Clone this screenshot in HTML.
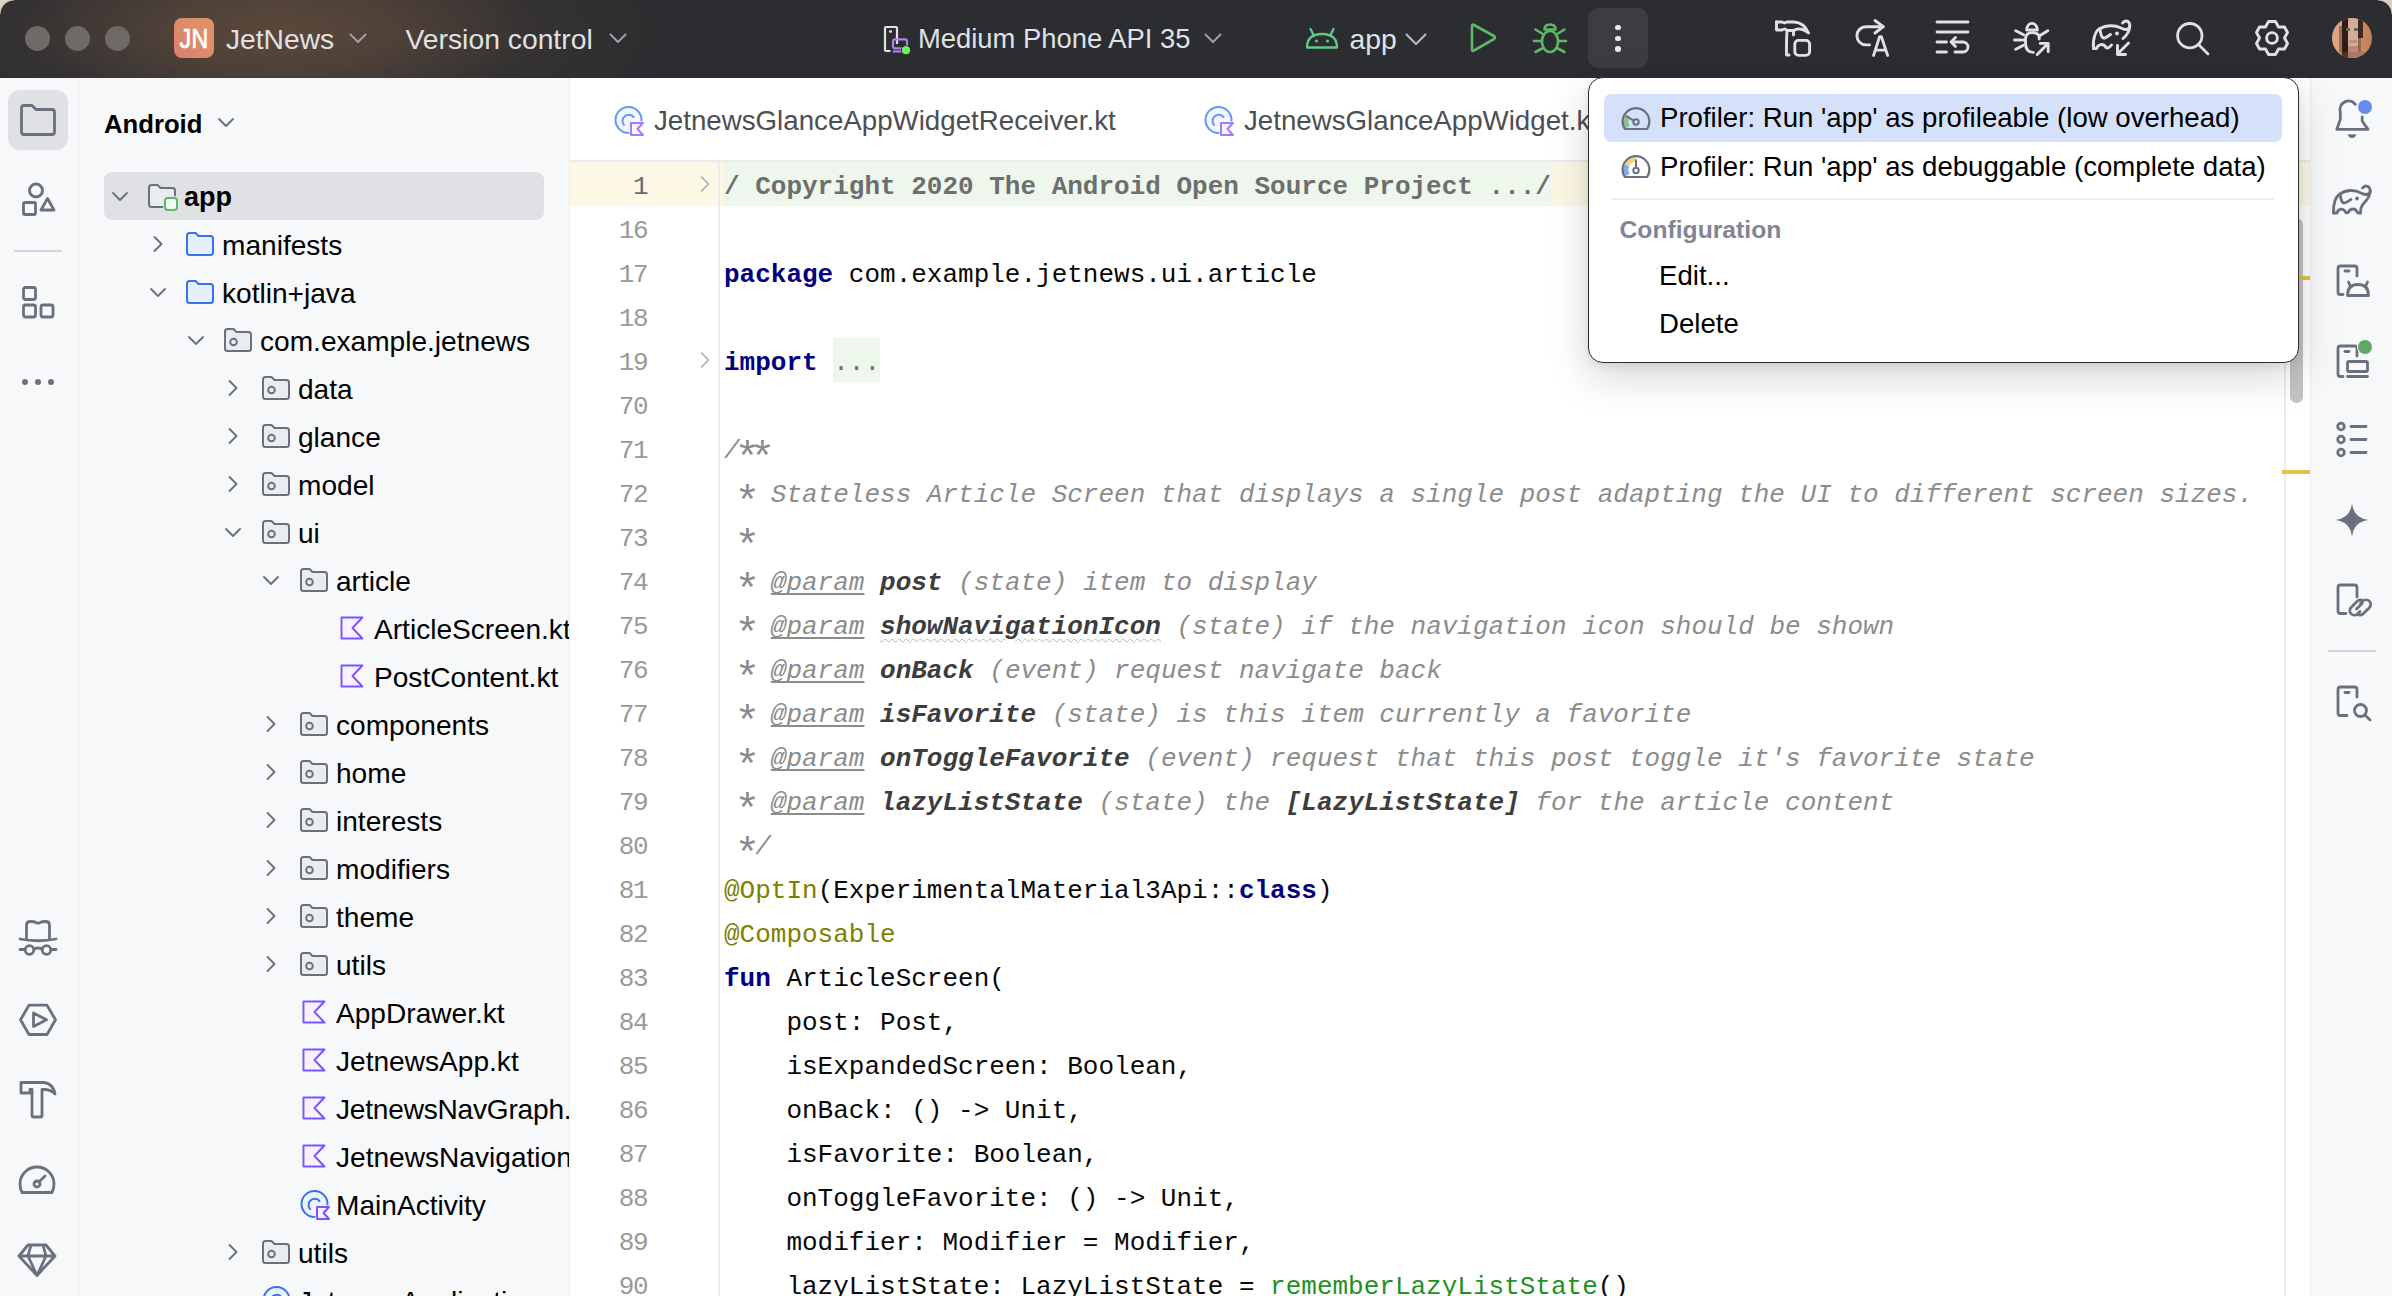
<!DOCTYPE html>
<html><head><meta charset="utf-8"><style>
*{margin:0;padding:0;box-sizing:border-box}
html,body{width:2392px;height:1296px;overflow:hidden;background:#fff}
body{position:relative;font-family:"Liberation Sans",sans-serif;color:#000}
.a{position:absolute}
#title{left:0;top:0;width:2392px;height:78px;background:#2b2d30;overflow:hidden}
.tt{color:#dfe1e5;font-size:27.6px;line-height:78px;top:0;white-space:nowrap}
.row{position:absolute;height:48px;line-height:51px;font-size:28.1px;white-space:nowrap;color:#000}
.ln{position:absolute;left:0;width:77.3px;text-align:right;letter-spacing:-1.3px;font-family:"Liberation Mono",monospace;font-size:26px;color:#999999;height:44px;line-height:50px}
.cl{position:absolute;left:154px;height:44px;line-height:50px;font-family:"Liberation Mono",monospace;font-size:26px;white-space:pre;color:#080808}
.kw{color:#000080;font-weight:bold}
.cm{color:#8c8c8c;font-style:italic}
.tag{color:#8c8c8c;font-style:italic;text-decoration:underline;text-underline-offset:3px;text-decoration-skip-ink:none;text-decoration-thickness:1.5px}
.pn{color:#3d3d3d;font-style:italic;font-weight:bold}
.pnw{color:#3d3d3d;font-style:italic;font-weight:bold;text-decoration:underline wavy #b8b8b8;text-decoration-thickness:1px;text-underline-offset:4px}
.an{color:#808000}
.ast{display:inline-block;width:15.6px;text-align:center;font-style:normal;transform:translate(-0.5px,8.5px) scale(1.65)}
.fn{color:#248f24}
.fold{color:#6e6e6e;font-weight:bold}
.dots{color:#6e6e6e;background:#eef7ec;display:inline-block;height:44px;line-height:50px;vertical-align:top}
.mi{position:absolute;font-size:27.6px;line-height:48px;height:48px;white-space:nowrap;color:#000}
svg{position:absolute;overflow:visible}
</style></head><body>
<div class="a" style="left:0;top:78px;width:79px;height:1218px;background:#f7f8fa;border-right:1.5px solid #ebecf0"></div>
<div class="a" style="left:8px;top:90px;width:60px;height:60px;border-radius:12px;background:#dfe1e5"></div>
<svg style="left:18px;top:102px" width="40" height="36" viewBox="0 0 40 36"><path d="M3.5,6 Q3.5,3.5 6,3.5 H14 L18,7.5 H34 Q36.5,7.5 36.5,10 V30 Q36.5,32.5 34,32.5 H6 Q3.5,32.5 3.5,30 Z" fill="none" stroke="#6c707e" stroke-width="2.8" stroke-linecap="round" stroke-linejoin="round" /></svg>
<svg style="left:18px;top:180px" width="40" height="40" viewBox="0 0 40 40"><circle cx="18" cy="10.5" r="6.5" fill="none" stroke="#6c707e" stroke-width="2.8" stroke-linecap="round" stroke-linejoin="round" /><rect x="5.5" y="22.5" width="12" height="12" rx="1.5" fill="none" stroke="#6c707e" stroke-width="2.8" stroke-linecap="round" stroke-linejoin="round" /><path d="M29.5,18.5 L36,30 H23 Z" fill="none" stroke="#6c707e" stroke-width="2.8" stroke-linecap="round" stroke-linejoin="round" /></svg>
<div class="a" style="left:14px;top:249.5px;width:48px;height:2px;background:#d3d5db"></div>
<svg style="left:18px;top:283px" width="40" height="40" viewBox="0 0 40 40"><rect x="5.5" y="4.5" width="12" height="12" rx="2" fill="none" stroke="#6c707e" stroke-width="2.8" stroke-linecap="round" stroke-linejoin="round" /><rect x="5.5" y="22" width="12" height="12" rx="2" fill="none" stroke="#6c707e" stroke-width="2.8" stroke-linecap="round" stroke-linejoin="round" /><rect x="23" y="22" width="12" height="12" rx="2" fill="none" stroke="#6c707e" stroke-width="2.8" stroke-linecap="round" stroke-linejoin="round" /></svg>
<div class="a" style="left:21.7px;top:378.7px;width:6px;height:6px;border-radius:50%;background:#6c707e"></div>
<div class="a" style="left:34.8px;top:378.7px;width:6px;height:6px;border-radius:50%;background:#6c707e"></div>
<div class="a" style="left:48.1px;top:378.7px;width:6px;height:6px;border-radius:50%;background:#6c707e"></div>
<svg style="left:18px;top:918px" width="40" height="40" viewBox="0 0 40 40"><path d="M8.5,20.5 V7.5 Q8.5,3.5 12.5,3.5 Q16,3.5 18.5,4.8 Q20,5.3 21.5,4.8 Q24,3.5 27.5,3.5 Q31.5,3.5 31.5,7.5 V20.5" fill="none" stroke="#6c707e" stroke-width="2.8" stroke-linecap="round" stroke-linejoin="round" /><path d="M2,21 Q20,24.5 38,21" fill="none" stroke="#6c707e" stroke-width="2.8" stroke-linecap="round" stroke-linejoin="round" /><circle cx="11.5" cy="32" r="4.3" fill="none" stroke="#6c707e" stroke-width="2.8" stroke-linecap="round" stroke-linejoin="round" /><circle cx="28.5" cy="32" r="4.3" fill="none" stroke="#6c707e" stroke-width="2.8" stroke-linecap="round" stroke-linejoin="round" /><path d="M2,31.5 H7 M33,31.5 H38 M16,31 Q20,29 24,31" fill="none" stroke="#6c707e" stroke-width="2.8" stroke-linecap="round" stroke-linejoin="round" /></svg>
<svg style="left:18px;top:1000px" width="40" height="40" viewBox="0 0 40 40"><path d="M11,5.2 H29 L37.5,19.8 L29,34.5 H11 L2.5,19.8 Z" fill="none" stroke="#6c707e" stroke-width="2.8" stroke-linecap="round" stroke-linejoin="round" /><path d="M15.5,13 L28.5,19.8 L15.5,26.6 Z" fill="none" stroke="#6c707e" stroke-width="2.8" stroke-linecap="round" stroke-linejoin="round" /></svg>
<svg style="left:18px;top:1079px" width="40" height="40" viewBox="0 0 40 40"><path d="M3,3.5 H25 Q35,4 37,15 Q33,10.5 26,10.5 H24 V36.5 Q24,38 22.5,38 H15.5 Q14,38 14,36.5 V10.5 H12 V14 H3 Z" fill="none" stroke="#6c707e" stroke-width="2.8" stroke-linecap="round" stroke-linejoin="round" /><path d="M14,14 H24" fill="none" stroke="#6c707e" stroke-width="2.8" stroke-linecap="round" stroke-linejoin="round"  opacity="0"/></svg>
<svg style="left:18px;top:1162px" width="40" height="34" viewBox="0 0 40 34"><path d="M4,30.5 Q2,26.5 2,22 A17,17 0 0 1 36,22 Q36,26.5 34,30.5 Z" fill="none" stroke="#6c707e" stroke-width="2.8" stroke-linecap="round" stroke-linejoin="round" /><circle cx="19" cy="22" r="3" fill="none" stroke="#6c707e" stroke-width="2.8" stroke-linecap="round" stroke-linejoin="round" /><path d="M21,20 L27,14" fill="none" stroke="#6c707e" stroke-width="2.8" stroke-linecap="round" stroke-linejoin="round" /></svg>
<svg style="left:18px;top:1241px" width="40" height="38" viewBox="0 0 40 38"><path d="M10,4 H28 L37,15 L19,34.5 L1,15 Z M1,15 H37 M13,4 L10,15 L19,34.5 L28,15 L25,4" fill="none" stroke="#6c707e" stroke-width="2.8" stroke-linecap="round" stroke-linejoin="round" /></svg>
<div class="a" style="left:0;top:78px;width:569px;height:1218px;overflow:hidden">
<div class="a" style="left:79px;top:0;width:490px;height:1218px;background:#f7f8fa"></div>
<div class="a" style="left:568.5px;top:0;width:1.5px;height:1218px;background:#ebecf0"></div>
<div class="a" style="left:104px;top:22px;height:48px;line-height:48px;font-size:25.7px;font-weight:bold;color:#000;white-space:nowrap">Android</div>
<svg style="left:218.0px;top:40.0px" width="16" height="9" viewBox="0 0 16 9"><path d="M1,1 L8.0,8 L15,1" fill="none" stroke="#6c707e" stroke-width="1.9" stroke-linecap="round" stroke-linejoin="round"/></svg>
<div class="a" style="left:104px;top:94px;width:440px;height:48px;border-radius:8px;background:#dfe1e5"></div>
<svg style="left:112.0px;top:113.5px" width="16" height="9" viewBox="0 0 16 9"><path d="M1,1 L8.0,8 L15,1" fill="none" stroke="#6c707e" stroke-width="1.9" stroke-linecap="round" stroke-linejoin="round"/></svg>
<svg style="left:148px;top:106px" width="30" height="28" viewBox="0 0 30 28"><path d="M1,3.5 Q1,1 3.5,1 H9.5 L12.5,4 H24.5 Q27,4 27,6.5 V20.5 Q27,23 24.5,23 H3.5 Q1,23 1,20.5 Z" fill="#ebecf0" stroke="#6c707e" stroke-width="2" stroke-linejoin="round"/><rect x="17" y="14" width="12" height="12" rx="3" fill="#dfe1e5" stroke="#dfe1e5" stroke-width="4"/><rect x="17" y="14" width="12" height="12" rx="3" fill="#f2fcf3" stroke="#5fb865" stroke-width="2"/></svg>
<div class="row" style="left:184px;top:94px;font-weight:bold;font-size:27px;">app</div>
<svg style="left:152.8px;top:158px" width="10" height="16" viewBox="0 0 10 16"><path d="M1.5,1 L8.5,8 L1.5,15" fill="none" stroke="#6c707e" stroke-width="1.9" stroke-linecap="round" stroke-linejoin="round"/></svg>
<svg style="left:186px;top:154px" width="28" height="24" viewBox="0 0 28 24"><path d="M1,3.5 Q1,1 3.5,1 H9.5 L12.5,4 H24.5 Q27,4 27,6.5 V20.5 Q27,23 24.5,23 H3.5 Q1,23 1,20.5 Z" fill="#e7effd" stroke="#3574f0" stroke-width="2" stroke-linejoin="round"/></svg>
<div class="row" style="left:222px;top:142px;">manifests</div>
<svg style="left:149.8px;top:209.5px" width="16" height="9" viewBox="0 0 16 9"><path d="M1,1 L8.0,8 L15,1" fill="none" stroke="#6c707e" stroke-width="1.9" stroke-linecap="round" stroke-linejoin="round"/></svg>
<svg style="left:186px;top:202px" width="28" height="24" viewBox="0 0 28 24"><path d="M1,3.5 Q1,1 3.5,1 H9.5 L12.5,4 H24.5 Q27,4 27,6.5 V20.5 Q27,23 24.5,23 H3.5 Q1,23 1,20.5 Z" fill="#e7effd" stroke="#3574f0" stroke-width="2" stroke-linejoin="round"/></svg>
<div class="row" style="left:222px;top:190px;">kotlin+java</div>
<svg style="left:187.6px;top:257.5px" width="16" height="9" viewBox="0 0 16 9"><path d="M1,1 L8.0,8 L15,1" fill="none" stroke="#6c707e" stroke-width="1.9" stroke-linecap="round" stroke-linejoin="round"/></svg>
<svg style="left:224px;top:250px" width="28" height="24" viewBox="0 0 28 24"><path d="M1,3.5 Q1,1 3.5,1 H9.5 L12.5,4 H24.5 Q27,4 27,6.5 V20.5 Q27,23 24.5,23 H3.5 Q1,23 1,20.5 Z" fill="#ebecf0" stroke="#6c707e" stroke-width="2" stroke-linejoin="round"/><circle cx="9.5" cy="14" r="3.3" fill="none" stroke="#6c707e" stroke-width="1.9"/></svg>
<div class="row" style="left:260px;top:238px;">com.example.jetnews</div>
<svg style="left:228.39999999999998px;top:302px" width="10" height="16" viewBox="0 0 10 16"><path d="M1.5,1 L8.5,8 L1.5,15" fill="none" stroke="#6c707e" stroke-width="1.9" stroke-linecap="round" stroke-linejoin="round"/></svg>
<svg style="left:262px;top:298px" width="28" height="24" viewBox="0 0 28 24"><path d="M1,3.5 Q1,1 3.5,1 H9.5 L12.5,4 H24.5 Q27,4 27,6.5 V20.5 Q27,23 24.5,23 H3.5 Q1,23 1,20.5 Z" fill="#ebecf0" stroke="#6c707e" stroke-width="2" stroke-linejoin="round"/><circle cx="9.5" cy="14" r="3.3" fill="none" stroke="#6c707e" stroke-width="1.9"/></svg>
<div class="row" style="left:298px;top:286px;">data</div>
<svg style="left:228.39999999999998px;top:350px" width="10" height="16" viewBox="0 0 10 16"><path d="M1.5,1 L8.5,8 L1.5,15" fill="none" stroke="#6c707e" stroke-width="1.9" stroke-linecap="round" stroke-linejoin="round"/></svg>
<svg style="left:262px;top:346px" width="28" height="24" viewBox="0 0 28 24"><path d="M1,3.5 Q1,1 3.5,1 H9.5 L12.5,4 H24.5 Q27,4 27,6.5 V20.5 Q27,23 24.5,23 H3.5 Q1,23 1,20.5 Z" fill="#ebecf0" stroke="#6c707e" stroke-width="2" stroke-linejoin="round"/><circle cx="9.5" cy="14" r="3.3" fill="none" stroke="#6c707e" stroke-width="1.9"/></svg>
<div class="row" style="left:298px;top:334px;">glance</div>
<svg style="left:228.39999999999998px;top:398px" width="10" height="16" viewBox="0 0 10 16"><path d="M1.5,1 L8.5,8 L1.5,15" fill="none" stroke="#6c707e" stroke-width="1.9" stroke-linecap="round" stroke-linejoin="round"/></svg>
<svg style="left:262px;top:394px" width="28" height="24" viewBox="0 0 28 24"><path d="M1,3.5 Q1,1 3.5,1 H9.5 L12.5,4 H24.5 Q27,4 27,6.5 V20.5 Q27,23 24.5,23 H3.5 Q1,23 1,20.5 Z" fill="#ebecf0" stroke="#6c707e" stroke-width="2" stroke-linejoin="round"/><circle cx="9.5" cy="14" r="3.3" fill="none" stroke="#6c707e" stroke-width="1.9"/></svg>
<div class="row" style="left:298px;top:382px;">model</div>
<svg style="left:225.39999999999998px;top:449.5px" width="16" height="9" viewBox="0 0 16 9"><path d="M1,1 L8.0,8 L15,1" fill="none" stroke="#6c707e" stroke-width="1.9" stroke-linecap="round" stroke-linejoin="round"/></svg>
<svg style="left:262px;top:442px" width="28" height="24" viewBox="0 0 28 24"><path d="M1,3.5 Q1,1 3.5,1 H9.5 L12.5,4 H24.5 Q27,4 27,6.5 V20.5 Q27,23 24.5,23 H3.5 Q1,23 1,20.5 Z" fill="#ebecf0" stroke="#6c707e" stroke-width="2" stroke-linejoin="round"/><circle cx="9.5" cy="14" r="3.3" fill="none" stroke="#6c707e" stroke-width="1.9"/></svg>
<div class="row" style="left:298px;top:430px;">ui</div>
<svg style="left:263.2px;top:497.5px" width="16" height="9" viewBox="0 0 16 9"><path d="M1,1 L8.0,8 L15,1" fill="none" stroke="#6c707e" stroke-width="1.9" stroke-linecap="round" stroke-linejoin="round"/></svg>
<svg style="left:300px;top:490px" width="28" height="24" viewBox="0 0 28 24"><path d="M1,3.5 Q1,1 3.5,1 H9.5 L12.5,4 H24.5 Q27,4 27,6.5 V20.5 Q27,23 24.5,23 H3.5 Q1,23 1,20.5 Z" fill="#ebecf0" stroke="#6c707e" stroke-width="2" stroke-linejoin="round"/><circle cx="9.5" cy="14" r="3.3" fill="none" stroke="#6c707e" stroke-width="1.9"/></svg>
<div class="row" style="left:336px;top:478px;">article</div>
<svg style="left:340px;top:538px" width="24" height="24" viewBox="0 0 24 24"><path d="M1.5,1.5 H22.5 L12.5,12 L22.5,22.5 H1.5 Z" transform="scale(1.0)" fill="#f6f2ff" stroke="#7f52ff" stroke-width="1.9" stroke-linejoin="round"/></svg>
<div class="row" style="left:374px;top:526px;">ArticleScreen.kt</div>
<svg style="left:340px;top:586px" width="24" height="24" viewBox="0 0 24 24"><path d="M1.5,1.5 H22.5 L12.5,12 L22.5,22.5 H1.5 Z" transform="scale(1.0)" fill="#f6f2ff" stroke="#7f52ff" stroke-width="1.9" stroke-linejoin="round"/></svg>
<div class="row" style="left:374px;top:574px;">PostContent.kt</div>
<svg style="left:266.2px;top:638px" width="10" height="16" viewBox="0 0 10 16"><path d="M1.5,1 L8.5,8 L1.5,15" fill="none" stroke="#6c707e" stroke-width="1.9" stroke-linecap="round" stroke-linejoin="round"/></svg>
<svg style="left:300px;top:634px" width="28" height="24" viewBox="0 0 28 24"><path d="M1,3.5 Q1,1 3.5,1 H9.5 L12.5,4 H24.5 Q27,4 27,6.5 V20.5 Q27,23 24.5,23 H3.5 Q1,23 1,20.5 Z" fill="#ebecf0" stroke="#6c707e" stroke-width="2" stroke-linejoin="round"/><circle cx="9.5" cy="14" r="3.3" fill="none" stroke="#6c707e" stroke-width="1.9"/></svg>
<div class="row" style="left:336px;top:622px;">components</div>
<svg style="left:266.2px;top:686px" width="10" height="16" viewBox="0 0 10 16"><path d="M1.5,1 L8.5,8 L1.5,15" fill="none" stroke="#6c707e" stroke-width="1.9" stroke-linecap="round" stroke-linejoin="round"/></svg>
<svg style="left:300px;top:682px" width="28" height="24" viewBox="0 0 28 24"><path d="M1,3.5 Q1,1 3.5,1 H9.5 L12.5,4 H24.5 Q27,4 27,6.5 V20.5 Q27,23 24.5,23 H3.5 Q1,23 1,20.5 Z" fill="#ebecf0" stroke="#6c707e" stroke-width="2" stroke-linejoin="round"/><circle cx="9.5" cy="14" r="3.3" fill="none" stroke="#6c707e" stroke-width="1.9"/></svg>
<div class="row" style="left:336px;top:670px;">home</div>
<svg style="left:266.2px;top:734px" width="10" height="16" viewBox="0 0 10 16"><path d="M1.5,1 L8.5,8 L1.5,15" fill="none" stroke="#6c707e" stroke-width="1.9" stroke-linecap="round" stroke-linejoin="round"/></svg>
<svg style="left:300px;top:730px" width="28" height="24" viewBox="0 0 28 24"><path d="M1,3.5 Q1,1 3.5,1 H9.5 L12.5,4 H24.5 Q27,4 27,6.5 V20.5 Q27,23 24.5,23 H3.5 Q1,23 1,20.5 Z" fill="#ebecf0" stroke="#6c707e" stroke-width="2" stroke-linejoin="round"/><circle cx="9.5" cy="14" r="3.3" fill="none" stroke="#6c707e" stroke-width="1.9"/></svg>
<div class="row" style="left:336px;top:718px;">interests</div>
<svg style="left:266.2px;top:782px" width="10" height="16" viewBox="0 0 10 16"><path d="M1.5,1 L8.5,8 L1.5,15" fill="none" stroke="#6c707e" stroke-width="1.9" stroke-linecap="round" stroke-linejoin="round"/></svg>
<svg style="left:300px;top:778px" width="28" height="24" viewBox="0 0 28 24"><path d="M1,3.5 Q1,1 3.5,1 H9.5 L12.5,4 H24.5 Q27,4 27,6.5 V20.5 Q27,23 24.5,23 H3.5 Q1,23 1,20.5 Z" fill="#ebecf0" stroke="#6c707e" stroke-width="2" stroke-linejoin="round"/><circle cx="9.5" cy="14" r="3.3" fill="none" stroke="#6c707e" stroke-width="1.9"/></svg>
<div class="row" style="left:336px;top:766px;">modifiers</div>
<svg style="left:266.2px;top:830px" width="10" height="16" viewBox="0 0 10 16"><path d="M1.5,1 L8.5,8 L1.5,15" fill="none" stroke="#6c707e" stroke-width="1.9" stroke-linecap="round" stroke-linejoin="round"/></svg>
<svg style="left:300px;top:826px" width="28" height="24" viewBox="0 0 28 24"><path d="M1,3.5 Q1,1 3.5,1 H9.5 L12.5,4 H24.5 Q27,4 27,6.5 V20.5 Q27,23 24.5,23 H3.5 Q1,23 1,20.5 Z" fill="#ebecf0" stroke="#6c707e" stroke-width="2" stroke-linejoin="round"/><circle cx="9.5" cy="14" r="3.3" fill="none" stroke="#6c707e" stroke-width="1.9"/></svg>
<div class="row" style="left:336px;top:814px;">theme</div>
<svg style="left:266.2px;top:878px" width="10" height="16" viewBox="0 0 10 16"><path d="M1.5,1 L8.5,8 L1.5,15" fill="none" stroke="#6c707e" stroke-width="1.9" stroke-linecap="round" stroke-linejoin="round"/></svg>
<svg style="left:300px;top:874px" width="28" height="24" viewBox="0 0 28 24"><path d="M1,3.5 Q1,1 3.5,1 H9.5 L12.5,4 H24.5 Q27,4 27,6.5 V20.5 Q27,23 24.5,23 H3.5 Q1,23 1,20.5 Z" fill="#ebecf0" stroke="#6c707e" stroke-width="2" stroke-linejoin="round"/><circle cx="9.5" cy="14" r="3.3" fill="none" stroke="#6c707e" stroke-width="1.9"/></svg>
<div class="row" style="left:336px;top:862px;">utils</div>
<svg style="left:302px;top:922px" width="24" height="24" viewBox="0 0 24 24"><path d="M1.5,1.5 H22.5 L12.5,12 L22.5,22.5 H1.5 Z" transform="scale(1.0)" fill="#f6f2ff" stroke="#7f52ff" stroke-width="1.9" stroke-linejoin="round"/></svg>
<div class="row" style="left:336px;top:910px;">AppDrawer.kt</div>
<svg style="left:302px;top:970px" width="24" height="24" viewBox="0 0 24 24"><path d="M1.5,1.5 H22.5 L12.5,12 L22.5,22.5 H1.5 Z" transform="scale(1.0)" fill="#f6f2ff" stroke="#7f52ff" stroke-width="1.9" stroke-linejoin="round"/></svg>
<div class="row" style="left:336px;top:958px;">JetnewsApp.kt</div>
<svg style="left:302px;top:1018px" width="24" height="24" viewBox="0 0 24 24"><path d="M1.5,1.5 H22.5 L12.5,12 L22.5,22.5 H1.5 Z" transform="scale(1.0)" fill="#f6f2ff" stroke="#7f52ff" stroke-width="1.9" stroke-linejoin="round"/></svg>
<div class="row" style="left:336px;top:1006px;letter-spacing:-0.22px;">JetnewsNavGraph.kt</div>
<svg style="left:302px;top:1066px" width="24" height="24" viewBox="0 0 24 24"><path d="M1.5,1.5 H22.5 L12.5,12 L22.5,22.5 H1.5 Z" transform="scale(1.0)" fill="#f6f2ff" stroke="#7f52ff" stroke-width="1.9" stroke-linejoin="round"/></svg>
<div class="row" style="left:336px;top:1054px;">JetnewsNavigation.kt</div>
<svg style="left:299.5px;top:1112px" width="32" height="32" viewBox="0 0 32 32"><path d="M14.5,27 A13,13 0 1 1 27.5,14.5" fill="#eef3fe" stroke="#3574f0" stroke-width="2" stroke-linecap="round"/><path d="M10,19 A6,6 0 1 1 19.5,11" fill="none" stroke="#3574f0" stroke-width="2" stroke-linecap="round"/><path d="M17,17 H29 L23.5,23 L29,29 H17 Z" fill="#f6f2ff" stroke="#7f52ff" stroke-width="2" stroke-linejoin="round"/></svg>
<div class="row" style="left:336px;top:1102px;">MainActivity</div>
<svg style="left:228.39999999999998px;top:1166px" width="10" height="16" viewBox="0 0 10 16"><path d="M1.5,1 L8.5,8 L1.5,15" fill="none" stroke="#6c707e" stroke-width="1.9" stroke-linecap="round" stroke-linejoin="round"/></svg>
<svg style="left:262px;top:1162px" width="28" height="24" viewBox="0 0 28 24"><path d="M1,3.5 Q1,1 3.5,1 H9.5 L12.5,4 H24.5 Q27,4 27,6.5 V20.5 Q27,23 24.5,23 H3.5 Q1,23 1,20.5 Z" fill="#ebecf0" stroke="#6c707e" stroke-width="2" stroke-linejoin="round"/><circle cx="9.5" cy="14" r="3.3" fill="none" stroke="#6c707e" stroke-width="1.9"/></svg>
<div class="row" style="left:298px;top:1150px;">utils</div>
<svg style="left:261.5px;top:1208px" width="32" height="32" viewBox="0 0 32 32"><path d="M14.5,27 A13,13 0 1 1 27.5,14.5" fill="#eef3fe" stroke="#3574f0" stroke-width="2" stroke-linecap="round"/><path d="M10,19 A6,6 0 1 1 19.5,11" fill="none" stroke="#3574f0" stroke-width="2" stroke-linecap="round"/><path d="M17,17 H29 L23.5,23 L29,29 H17 Z" fill="#f6f2ff" stroke="#7f52ff" stroke-width="2" stroke-linejoin="round"/></svg>
<div class="row" style="left:298px;top:1198px;">JetnewsApplication</div>
</div>
<div class="a" style="left:570px;top:78px;width:1740px;height:83px;background:#fff"></div>
<div class="a" style="left:568.5px;top:78px;width:1.5px;height:1218px;background:#ebecf0"></div>
<div class="a" style="left:570px;top:159.5px;width:1740px;height:2px;background:#ebecf0"></div>
<div class="a" style="left:0;top:0;opacity:0.75"><svg style="left:614px;top:106px" width="32" height="32" viewBox="0 0 32 32"><path d="M14.5,27 A13,13 0 1 1 27.5,14.5" fill="#eef3fe" stroke="#3574f0" stroke-width="2" stroke-linecap="round"/><path d="M10,19 A6,6 0 1 1 19.5,11" fill="none" stroke="#3574f0" stroke-width="2" stroke-linecap="round"/><path d="M17,17 H29 L23.5,23 L29,29 H17 Z" fill="#f6f2ff" stroke="#7f52ff" stroke-width="2" stroke-linejoin="round"/></svg></div>
<div class="a" style="left:654px;top:97px;height:48px;line-height:48px;font-size:27.7px;color:#4d4e52;white-space:nowrap">JetnewsGlanceAppWidgetReceiver.kt</div>
<div class="a" style="left:0;top:0;opacity:0.75"><svg style="left:1204px;top:106px" width="32" height="32" viewBox="0 0 32 32"><path d="M14.5,27 A13,13 0 1 1 27.5,14.5" fill="#eef3fe" stroke="#3574f0" stroke-width="2" stroke-linecap="round"/><path d="M10,19 A6,6 0 1 1 19.5,11" fill="none" stroke="#3574f0" stroke-width="2" stroke-linecap="round"/><path d="M17,17 H29 L23.5,23 L29,29 H17 Z" fill="#f6f2ff" stroke="#7f52ff" stroke-width="2" stroke-linejoin="round"/></svg></div>
<div class="a" style="left:1244px;top:97px;height:48px;line-height:48px;font-size:27.7px;color:#4d4e52;white-space:nowrap">JetnewsGlanceAppWidget.kt</div>
<div class="a" style="left:2284px;top:162px;width:26px;height:44px;background:#fdf8e6"></div>
<div class="a" style="left:2284px;top:161px;width:1.5px;height:1135px;background:#ebecf0"></div>
<div class="a" style="left:2289.5px;top:218px;width:13.5px;height:185px;border-radius:7px;background:#c4c4c4"></div>
<div class="a" style="left:2282px;top:276px;width:28px;height:4px;background:#e4c342"></div>
<div class="a" style="left:2282px;top:470px;width:28px;height:4px;background:#e4c342"></div>
<div class="a" style="left:570px;top:161px;width:1715px;height:1135px;overflow:hidden">
<div class="a" style="left:0;top:1px;width:1740px;height:44px;background:#fdf8e6"></div>
<div class="a" style="left:153px;top:1px;width:829px;height:44px;background:#eef7ec"></div>
<div class="a" style="left:148px;top:0;width:2px;height:1135px;background:#ebecf0"></div>
<div class="ln" style="top:1px;color:#676a74;">1</div>
<svg style="left:130px;top:15px" width="10" height="16" viewBox="0 0 10 16"><path d="M1.5,1 L8.5,8 L1.5,15" fill="none" stroke="#a8adbd" stroke-width="1.6" stroke-linecap="round" stroke-linejoin="round"/></svg>
<div class="cl" style="top:1px"><span class="fold">/ Copyright 2020 The Android Open Source Project .../</span></div>
<div class="ln" style="top:45px;">16</div>
<div class="cl" style="top:45px"></div>
<div class="ln" style="top:89px;">17</div>
<div class="cl" style="top:89px"><span class="kw">package</span> com.example.jetnews.ui.article</div>
<div class="ln" style="top:133px;">18</div>
<div class="cl" style="top:133px"></div>
<div class="ln" style="top:177px;">19</div>
<svg style="left:130px;top:191px" width="10" height="16" viewBox="0 0 10 16"><path d="M1.5,1 L8.5,8 L1.5,15" fill="none" stroke="#a8adbd" stroke-width="1.6" stroke-linecap="round" stroke-linejoin="round"/></svg>
<div class="cl" style="top:177px"><span class="kw">import</span> <span class="dots">...</span></div>
<div class="ln" style="top:221px;">70</div>
<div class="cl" style="top:221px"></div>
<div class="ln" style="top:265px;">71</div>
<div class="cl" style="top:265px"><span class="cm">/<span class="ast">*</span><span class="ast">*</span></span></div>
<div class="ln" style="top:309px;">72</div>
<div class="cl" style="top:309px"><span class="cm"> <span class="ast">*</span> Stateless Article Screen that displays a single post adapting the UI to different screen sizes.</span></div>
<div class="ln" style="top:353px;">73</div>
<div class="cl" style="top:353px"><span class="cm"> <span class="ast">*</span></span></div>
<div class="ln" style="top:397px;">74</div>
<div class="cl" style="top:397px"><span class="cm"> <span class="ast">*</span> </span><span class="tag">@param</span><span class="cm"> </span><span class="pn">post</span><span class="cm"> (state) item to display</span></div>
<div class="ln" style="top:441px;">75</div>
<div class="cl" style="top:441px"><span class="cm"> <span class="ast">*</span> </span><span class="tag">@param</span><span class="cm"> </span><span class="pnw">showNavigationIcon</span><span class="cm"> (state) if the navigation icon should be shown</span></div>
<div class="ln" style="top:485px;">76</div>
<div class="cl" style="top:485px"><span class="cm"> <span class="ast">*</span> </span><span class="tag">@param</span><span class="cm"> </span><span class="pn">onBack</span><span class="cm"> (event) request navigate back</span></div>
<div class="ln" style="top:529px;">77</div>
<div class="cl" style="top:529px"><span class="cm"> <span class="ast">*</span> </span><span class="tag">@param</span><span class="cm"> </span><span class="pn">isFavorite</span><span class="cm"> (state) is this item currently a favorite</span></div>
<div class="ln" style="top:573px;">78</div>
<div class="cl" style="top:573px"><span class="cm"> <span class="ast">*</span> </span><span class="tag">@param</span><span class="cm"> </span><span class="pn">onToggleFavorite</span><span class="cm"> (event) request that this post toggle it&#x27;s favorite state</span></div>
<div class="ln" style="top:617px;">79</div>
<div class="cl" style="top:617px"><span class="cm"> <span class="ast">*</span> </span><span class="tag">@param</span><span class="cm"> </span><span class="pn">lazyListState</span><span class="cm"> (state) the </span><span class="pn">[LazyListState]</span><span class="cm"> for the article content</span></div>
<div class="ln" style="top:661px;">80</div>
<div class="cl" style="top:661px"><span class="cm"> <span class="ast">*</span>/</span></div>
<div class="ln" style="top:705px;">81</div>
<div class="cl" style="top:705px"><span class="an">@OptIn</span>(ExperimentalMaterial3Api::<span class="kw">class</span>)</div>
<div class="ln" style="top:749px;">82</div>
<div class="cl" style="top:749px"><span class="an">@Composable</span></div>
<div class="ln" style="top:793px;">83</div>
<div class="cl" style="top:793px"><span class="kw">fun</span> ArticleScreen(</div>
<div class="ln" style="top:837px;">84</div>
<div class="cl" style="top:837px">    post: Post,</div>
<div class="ln" style="top:881px;">85</div>
<div class="cl" style="top:881px">    isExpandedScreen: Boolean,</div>
<div class="ln" style="top:925px;">86</div>
<div class="cl" style="top:925px">    onBack: () -&gt; Unit,</div>
<div class="ln" style="top:969px;">87</div>
<div class="cl" style="top:969px">    isFavorite: Boolean,</div>
<div class="ln" style="top:1013px;">88</div>
<div class="cl" style="top:1013px">    onToggleFavorite: () -&gt; Unit,</div>
<div class="ln" style="top:1057px;">89</div>
<div class="cl" style="top:1057px">    modifier: Modifier = Modifier,</div>
<div class="ln" style="top:1101px;">90</div>
<div class="cl" style="top:1101px">    lazyListState: LazyListState = <span class="fn">rememberLazyListState</span>()</div>
</div>
<div class="a" style="left:2310px;top:78px;width:82px;height:1218px;background:#f7f8fa;border-left:1.5px solid #ebecf0"></div>
<svg style="left:2332px;top:100px" width="40" height="40" viewBox="0 0 40 40"><path d="M23.4,4.3 A8.6,8.6 0 0 0 8.3,11.8 V19.5 L4.8,29.4 H36 L30.2,21 V16.8" fill="none" stroke="#6c707e" stroke-width="2.8" stroke-linecap="round" stroke-linejoin="round" /><path d="M16,34.2 H24 A4,3.8 0 0 1 16,34.2 Z" fill="#6c707e"/></svg>
<div class="a" style="left:2358px;top:100.2px;width:13.8px;height:13.8px;border-radius:50%;background:#668be8"></div>
<svg style="left:2326px;top:176px" width="52" height="48" viewBox="0 0 52 48"><g fill="none" stroke="#6c707e" stroke-width="2.8" stroke-linecap="round" stroke-linejoin="round" ><path d="M7.5,37 C7,27 10,20 14,18 C20,13.5 29,13.5 35,17 C38,18.5 41,20 43.5,17 C45.5,13.5 43,10 40,10 C38.5,10 37.5,11 36.5,12"/><path d="M44.3,15 C44,21 41,24 38,27 C35.5,29.5 34.5,33 34.5,37"/><path d="M14,18 C15,24 16,27.5 18.5,27 C21,26.5 23,24.5 25,23.5"/><path d="M7.5,37 H11 C12.5,32 17.5,32 19.5,36 C20,37 22,37 22.5,36 C24.5,32 29.5,32 31,36 C31.5,37 33,37 34.5,37"/></g><circle cx="31" cy="22.5" r="1.9" fill="#6c707e"/></svg>
<svg style="left:2332px;top:262px" width="42" height="40" viewBox="0 0 42 40"><path d="M25,14 V6.5 Q25,4 22.5,4 H8.5 Q6,4 6,6.5 V30 Q6,32.5 8.5,32.5 H11" fill="none" stroke="#6c707e" stroke-width="2.8" stroke-linecap="round" stroke-linejoin="round" /><path d="M13,9 H17" fill="none" stroke="#6c707e" stroke-width="2.8" stroke-linecap="round" stroke-linejoin="round" /><path d="M15.5,33.5 Q15.5,22.5 26,22.5 Q36.5,22.5 36.5,33.5 Z" fill="none" stroke="#6c707e" stroke-width="2.8" stroke-linecap="round" stroke-linejoin="round" /><path d="M18.5,24.5 L16.5,20 M33.5,24.5 L35.5,20" fill="none" stroke="#6c707e" stroke-width="2.8" stroke-linecap="round" stroke-linejoin="round" /></svg>
<svg style="left:2332px;top:344px" width="42" height="40" viewBox="0 0 42 40"><path d="M25,12 V4.5 Q25,2 22.5,2 H8.5 Q6,2 6,4.5 V30 Q6,32.5 8.5,32.5 H11" fill="none" stroke="#6c707e" stroke-width="2.8" stroke-linecap="round" stroke-linejoin="round" /><path d="M13,7.5 H17" fill="none" stroke="#6c707e" stroke-width="2.8" stroke-linecap="round" stroke-linejoin="round" /><rect x="15.5" y="17.5" width="20" height="10" rx="1.5" fill="none" stroke="#6c707e" stroke-width="2.8" stroke-linecap="round" stroke-linejoin="round" /><path d="M15.5,32.5 H35.5" fill="none" stroke="#6c707e" stroke-width="2.8" stroke-linecap="round" stroke-linejoin="round" /></svg>
<div class="a" style="left:2356.5px;top:338.5px;width:16.5px;height:16.5px;border-radius:50%;background:#5fa867;border:1.5px solid #f7f8fa"></div>
<svg style="left:2332px;top:420px" width="40" height="40" viewBox="0 0 40 40"><circle cx="9" cy="6.5" r="3.3" fill="none" stroke="#6c707e" stroke-width="2.8" stroke-linecap="round" stroke-linejoin="round" /><circle cx="9" cy="19.5" r="3.3" fill="none" stroke="#6c707e" stroke-width="2.8" stroke-linecap="round" stroke-linejoin="round" /><circle cx="9" cy="32.5" r="3.3" fill="none" stroke="#6c707e" stroke-width="2.8" stroke-linecap="round" stroke-linejoin="round" /><path d="M19,6.5 H34 M19,19.5 H34 M19,32.5 H34" fill="none" stroke="#6c707e" stroke-width="2.8" stroke-linecap="round" stroke-linejoin="round" /></svg>
<svg style="left:2332px;top:500px" width="40" height="40" viewBox="0 0 40 40"><path d="M20,3 Q21.5,18.5 37,20 Q21.5,21.5 20,37 Q18.5,21.5 3,20 Q18.5,18.5 20,3 Z" fill="#6c707e"/></svg>
<svg style="left:2332px;top:581px" width="42" height="42" viewBox="0 0 42 42"><path d="M25,16 V6.5 Q25,4 22.5,4 H8.5 Q6,4 6,6.5 V30 Q6,32.5 8.5,32.5 H14" fill="none" stroke="#6c707e" stroke-width="2.8" stroke-linecap="round" stroke-linejoin="round" /><path d="M28.5,22.5 L31,20 A4.6,4.6 0 0 1 37.5,26.5 L35,29 M28,30.5 L25.5,33 A4.6,4.6 0 0 1 19,26.5 L21.5,24 M24.5,28 L30,22.5" fill="none" stroke="#6c707e" stroke-width="2.8" stroke-linecap="round" stroke-linejoin="round" /><path d="M21.5,24 L25,20.5 A4.6,4.6 0 0 1 31,20 M35,29 L31.5,32.5 A4.6,4.6 0 0 1 25.5,33" fill="none" stroke="#6c707e" stroke-width="2.8" stroke-linecap="round" stroke-linejoin="round" /></svg>
<div class="a" style="left:2328px;top:650px;width:48px;height:2px;background:#d3d5db"></div>
<svg style="left:2332px;top:683px" width="42" height="42" viewBox="0 0 42 42"><path d="M25,14 V6.5 Q25,4 22.5,4 H8.5 Q6,4 6,6.5 V30 Q6,32.5 8.5,32.5 H15" fill="none" stroke="#6c707e" stroke-width="2.8" stroke-linecap="round" stroke-linejoin="round" /><path d="M13,9.5 H17" fill="none" stroke="#6c707e" stroke-width="2.8" stroke-linecap="round" stroke-linejoin="round" /><circle cx="28.5" cy="27.5" r="6" fill="none" stroke="#6c707e" stroke-width="2.8" stroke-linecap="round" stroke-linejoin="round" /><path d="M33,32 L38,37" fill="none" stroke="#6c707e" stroke-width="2.8" stroke-linecap="round" stroke-linejoin="round" /></svg>
<div id="title" class="a">
<div class="a" style="left:0;top:0;width:2392px;height:78px;background:radial-gradient(ellipse 400px 130px at 280px 30px,rgba(92,72,58,1) 0%,rgba(84,68,58,0.85) 30%,rgba(62,54,52,0.5) 65%,rgba(43,45,48,0) 100%)"></div>
<div class="a" style="left:24.5px;top:25.5px;width:25px;height:25px;border-radius:50%;background:#6e6a67"></div>
<div class="a" style="left:64.5px;top:25.5px;width:25px;height:25px;border-radius:50%;background:#6e6a67"></div>
<div class="a" style="left:104.5px;top:25.5px;width:25px;height:25px;border-radius:50%;background:#6e6a67"></div>
<div class="a" style="left:174px;top:18px;width:40px;height:40px;border-radius:8px;background:linear-gradient(225deg,#e39566,#d8806f)"></div>
<div class="a" style="left:174px;top:19px;width:40px;height:40px;color:#fff;font-size:27px;line-height:41px;text-align:center;letter-spacing:0.5px;transform:scaleX(0.86);-webkit-text-stroke:0.7px #fff">JN</div>
<div class="a tt" style="left:226px;font-size:28.2px">JetNews</div>
<svg style="left:349px;top:33px" width="18" height="11" viewBox="0 0 18 11"><path d="M1.5,1.5 L9,9 L16.5,1.5" fill="none" stroke="#9da0a8" stroke-width="2" stroke-linecap="round" stroke-linejoin="round"/></svg>
<div class="a tt" style="left:405.5px;font-size:28.3px">Version control</div>
<svg style="left:609px;top:33px" width="18" height="11" viewBox="0 0 18 11"><path d="M1.5,1.5 L9,9 L16.5,1.5" fill="none" stroke="#9da0a8" stroke-width="2" stroke-linecap="round" stroke-linejoin="round"/></svg>
<svg style="left:882px;top:24px" width="30" height="32" viewBox="0 0 30 32"><path d="M15,20 V4 Q15,3 14,3 H4 Q3,3 3,4 V26 Q3,27 4,27 H8.5" fill="none" stroke="#dfe1e5" stroke-width="2.2"/><path d="M7,7.5 H10" stroke="#dfe1e5" stroke-width="2.2"/><rect x="11" y="15.3" width="14" height="9" rx="2" fill="none" stroke="#b57bf0" stroke-width="2.2"/><path d="M11,27.5 H21" stroke="#b57bf0" stroke-width="2.2"/><circle cx="24" cy="26.2" r="4.6" fill="#6df55b" stroke="#222" stroke-width="0.8"/></svg>
<div class="a tt" style="left:918px;font-size:27.4px">Medium Phone API 35</div>
<svg style="left:1204px;top:33px" width="18" height="11" viewBox="0 0 18 11"><path d="M1.5,1.5 L9,9 L16.5,1.5" fill="none" stroke="#9da0a8" stroke-width="2" stroke-linecap="round" stroke-linejoin="round"/></svg>
<svg style="left:1305px;top:26px" width="34" height="24" viewBox="0 0 34 24"><path d="M2,21.5 Q2,8 17,8 Q32,8 32,21.5 Z" fill="none" stroke="#5fc97e" stroke-width="2.4" stroke-linejoin="round"/><path d="M9,10 L5.5,3 M25,10 L28.5,3" stroke="#5fc97e" stroke-width="2.4" stroke-linecap="round"/><circle cx="11.5" cy="15" r="1.6" fill="#5fc97e"/><circle cx="22.5" cy="15" r="1.6" fill="#5fc97e"/></svg>
<div class="a tt" style="left:1349.5px;font-size:28.3px">app</div>
<svg style="left:1405px;top:33px" width="22" height="13" viewBox="0 0 22 13"><path d="M1.5,1.5 L11,11 L20.5,1.5" fill="none" stroke="#b4b7bd" stroke-width="2.2" stroke-linecap="round" stroke-linejoin="round"/></svg>
<svg style="left:1468px;top:22px" width="30" height="32" viewBox="0 0 30 32"><path d="M4,4 Q4,2 6,3 L26,14 Q28,15.5 26,17 L6,28.5 Q4,29.5 4,27.5 Z" fill="none" stroke="#5fb865" stroke-width="2.6" stroke-linejoin="round"/></svg>
<svg style="left:1532px;top:22px" width="36" height="32" viewBox="0 0 36 32"><path d="M18,9 A8,10.5 0 1 0 18.01,9 Z" fill="none" stroke="#5fb865" stroke-width="2.6"/><path d="M12.5,7.5 Q12.5,2.5 18,2.5 Q23.5,2.5 23.5,7.5 Z" fill="none" stroke="#5fb865" stroke-width="2.6" stroke-linejoin="round"/><path d="M2,19 H9.5 M26.5,19 H34 M3.5,7.5 L10,11.5 M32.5,7.5 L26,11.5 M3.5,30 L10,26.5 M32.5,30 L26,26.5" stroke="#5fb865" stroke-width="2.6" stroke-linecap="round"/></svg>
<div class="a" style="left:1588px;top:8px;width:60px;height:60px;border-radius:10px;background:#3b3d41"></div>
<div class="a" style="left:1615.3px;top:24.8px;width:5.4px;height:5.4px;border-radius:50%;background:#e8e9ec"></div>
<div class="a" style="left:1615.3px;top:35.599999999999994px;width:5.4px;height:5.4px;border-radius:50%;background:#e8e9ec"></div>
<div class="a" style="left:1615.3px;top:46.3px;width:5.4px;height:5.4px;border-radius:50%;background:#e8e9ec"></div>
<svg style="left:1772px;top:18px" width="40" height="40" viewBox="0 0 40 40"><g fill="none" stroke="#dfe1e5" stroke-width="2.9" stroke-linecap="round" stroke-linejoin="round"><path d="M4.5,4 H10 L12.5,5 L15,4 H22 Q32,4.5 36.5,15 Q31,10.5 26,11 Q23,11.3 21.5,12.5 V17"/><path d="M21.5,12.5 H15 Q14.5,20 14.5,28 V37 H17"/><path d="M15,12 L12.5,11 L10,12 H4.5 V4"/><rect x="22.8" y="22.4" width="14.8" height="15" rx="3.6"/></g></svg>
<svg style="left:1853px;top:18px" width="40" height="40" viewBox="0 0 40 40"><g fill="none" stroke="#dfe1e5" stroke-width="2.9" stroke-linecap="round" stroke-linejoin="round"><path d="M16.5,26.9 H13 A9.1,9.1 0 0 1 13,8.7 H30"/><path d="M22,2.5 L30.3,8.7 L22,15"/><path d="M20.6,37.4 L26.6,18.6 H28.4 L34.6,37.4 M22.6,32.1 H32.6"/></g></svg>
<svg style="left:1933px;top:18px" width="40" height="40" viewBox="0 0 40 40"><path d="M4,4 H35 M4,14 H35 M4,24 H13.5 M4,34 H13.5" stroke="#dfe1e5" stroke-width="2.8" stroke-linecap="round"/><path d="M22,34 H30 A5,5 0 0 0 30,24 H18 M22.5,19.5 L18,24 L22.5,28.5" fill="none" stroke="#dfe1e5" stroke-width="2.8" stroke-linecap="round" stroke-linejoin="round"/></svg>
<svg style="left:2012px;top:18px" width="40" height="40" viewBox="0 0 40 40"><g fill="none" stroke="#dfe1e5" stroke-width="2.9" stroke-linecap="round" stroke-linejoin="round"><path d="M14.6,12 A5.4,6.6 0 0 1 25.4,12 Z"/><path d="M21.3,34.4 Q13.5,34.4 13.5,25 V21.5 Q13.5,14.6 20,14.6 Q25.5,14.6 27.2,18 V21"/><path d="M3.8,12.8 L11.5,16.8 M2.5,22 H12 M3.8,31.3 L11.5,27.2 M27.2,18 L35.8,12.8"/><path d="M25.2,36.6 L36,25.6 M28.2,25.4 H36.2 V33.8"/></g></svg>
<svg style="left:2086px;top:14px" width="52" height="48" viewBox="0 0 52 48"><g fill="none" stroke="#dfe1e5" stroke-width="2.9" stroke-linecap="round" stroke-linejoin="round"><path d="M7.5,34.5 C6.5,24 10,16 14,14.5 C20,11 29,11 35,14 C38,15.5 41,16.5 43,14 C45,11 43,7 40,7 C38.5,7 37.5,8 36.5,9"/><path d="M43.8,12 C43.5,18 40,22 37,24.5"/><path d="M14,14.5 C14.5,21 16,24.5 18.5,24 C20.5,23.5 23,21.5 24.5,20.5"/><path d="M7.5,34.5 H10.5 C12,30 17.5,29 20,33.5 C21.5,35 24,33 25.5,31"/><path d="M42.5,29 L32.5,39 M31.5,31.5 V40.5 H39.5"/></g><circle cx="31" cy="19.5" r="1.9" fill="#dfe1e5"/></svg>
<svg style="left:2172px;top:18px" width="40" height="40" viewBox="0 0 40 40"><circle cx="17.8" cy="17.7" r="12.2" fill="none" stroke="#dfe1e5" stroke-width="2.8"/><path d="M26.5,26.5 L36,36" stroke="#dfe1e5" stroke-width="2.8" stroke-linecap="round"/></svg>
<svg style="left:2248px;top:14px" width="48" height="48" viewBox="0 0 48 48"><path d="M20.5,7.5 H27.5 L30.5,13 H36.5 L39.5,18.5 L36.5,24 L39.5,29.5 L36.5,35 H30.5 L27.5,40.5 H20.5 L17.5,35 H11.5 L8.5,29.5 L11.5,24 L8.5,18.5 L11.5,13 H17.5 Z" fill="none" stroke="#dfe1e5" stroke-width="2.9" stroke-linejoin="round"/><circle cx="24" cy="24" r="5.4" fill="none" stroke="#dfe1e5" stroke-width="2.9"/></svg>
<div class="a" style="left:2332px;top:18px;width:40px;height:40px;border-radius:50%;overflow:hidden;background:linear-gradient(90deg,#e0a882 0%,#d89c78 35%,#c88a5e 75%,#c07e58 100%)"><div class="a" style="left:7px;top:8px;width:3px;height:26px;background:#9a7055"></div><div class="a" style="left:10px;top:0;width:6px;height:40px;background:#2e1e16"></div><div class="a" style="left:16px;top:0;width:11px;height:40px;background:#d2ad9a"></div><div class="a" style="left:16px;top:28px;width:11px;height:12px;background:#b98a7a"></div><div class="a" style="left:26px;top:0;width:5px;height:20px;background:#3a2a1e"></div><div class="a" style="left:26px;top:20px;width:3px;height:14px;background:#8a6a50"></div><div class="a" style="left:14px;top:10px;width:4px;height:3px;background:#6e6450"></div><div class="a" style="left:22px;top:10px;width:4px;height:3px;background:#6e6450"></div><div class="a" style="left:17px;top:22px;width:8px;height:3px;background:#c48c88"></div><div class="a" style="left:0;top:34px;width:40px;height:6px;background:rgba(150,80,60,0.35)"></div></div>
<div class="a" style="left:0;top:0;width:14px;height:14px;background:radial-gradient(circle at 14px 14px,rgba(0,0,0,0) 13px,#d8d2c4 14px)"></div>
<div class="a" style="left:2378px;top:0;width:14px;height:14px;background:radial-gradient(circle at 0px 14px,rgba(0,0,0,0) 13px,#d8d2c4 14px)"></div>
</div>
<div class="a" style="left:1587.5px;top:77px;width:711px;height:286px;background:#fff;border:1.5px solid #2b2d30;border-radius:15px;box-shadow:0 14px 42px rgba(0,0,0,0.17),0 3px 8px rgba(0,0,0,0.08)"></div>
<div class="a" style="left:1604px;top:94px;width:678px;height:47.5px;border-radius:7px;background:#d5e1fb"></div>
<svg style="left:1620px;top:104px" width="32" height="28" viewBox="0 0 32 28"><path d="M7.74,23.06 A9.9,9.9 0 0 1 7.79,12.06" fill="none" stroke="#86c38a" stroke-width="4.6"/><path d="M4.83,25.00 A13.4,13.4 0 1 1 27.17,25.00 Z" fill="none" stroke="#6c707e" stroke-width="2.2" stroke-linejoin="round"/><circle cx="16" cy="18" r="2.7" fill="none" stroke="#6c707e" stroke-width="2"/><path d="M13.7,16.6 L6.4,12.2" stroke="#6c707e" stroke-width="2" stroke-linecap="round"/></svg>
<svg style="left:1620px;top:152px" width="32" height="28" viewBox="0 0 32 28"><path d="M7.74,23.06 A9.9,9.9 0 0 1 7.18,13.11" fill="none" stroke="#88a8ee" stroke-width="4.6"/><path d="M7.18,13.11 A9.9,9.9 0 0 1 16.00,7.70" fill="none" stroke="#f5d47e" stroke-width="4.6"/><path d="M4.83,25.00 A13.4,13.4 0 1 1 27.17,25.00 Z" fill="none" stroke="#6c707e" stroke-width="2.2" stroke-linejoin="round"/><circle cx="16" cy="18.5" r="2.7" fill="none" stroke="#6c707e" stroke-width="2"/><path d="M16,15.8 V8.2" stroke="#6c707e" stroke-width="2" stroke-linecap="round"/></svg>
<div class="a mi" style="left:1660px;top:94px">Profiler: Run 'app' as profileable (low overhead)</div>
<div class="a mi" style="left:1660px;top:143px">Profiler: Run 'app' as debuggable (complete data)</div>
<div class="a" style="left:1612px;top:198px;width:662px;height:2px;background:#ebecf0"></div>
<div class="a mi" style="left:1619.5px;top:206px;font-weight:bold;color:#818594;font-size:24.7px">Configuration</div>
<div class="a mi" style="left:1659px;top:251.5px">Edit...</div>
<div class="a mi" style="left:1659px;top:299.5px">Delete</div>
</body></html>
